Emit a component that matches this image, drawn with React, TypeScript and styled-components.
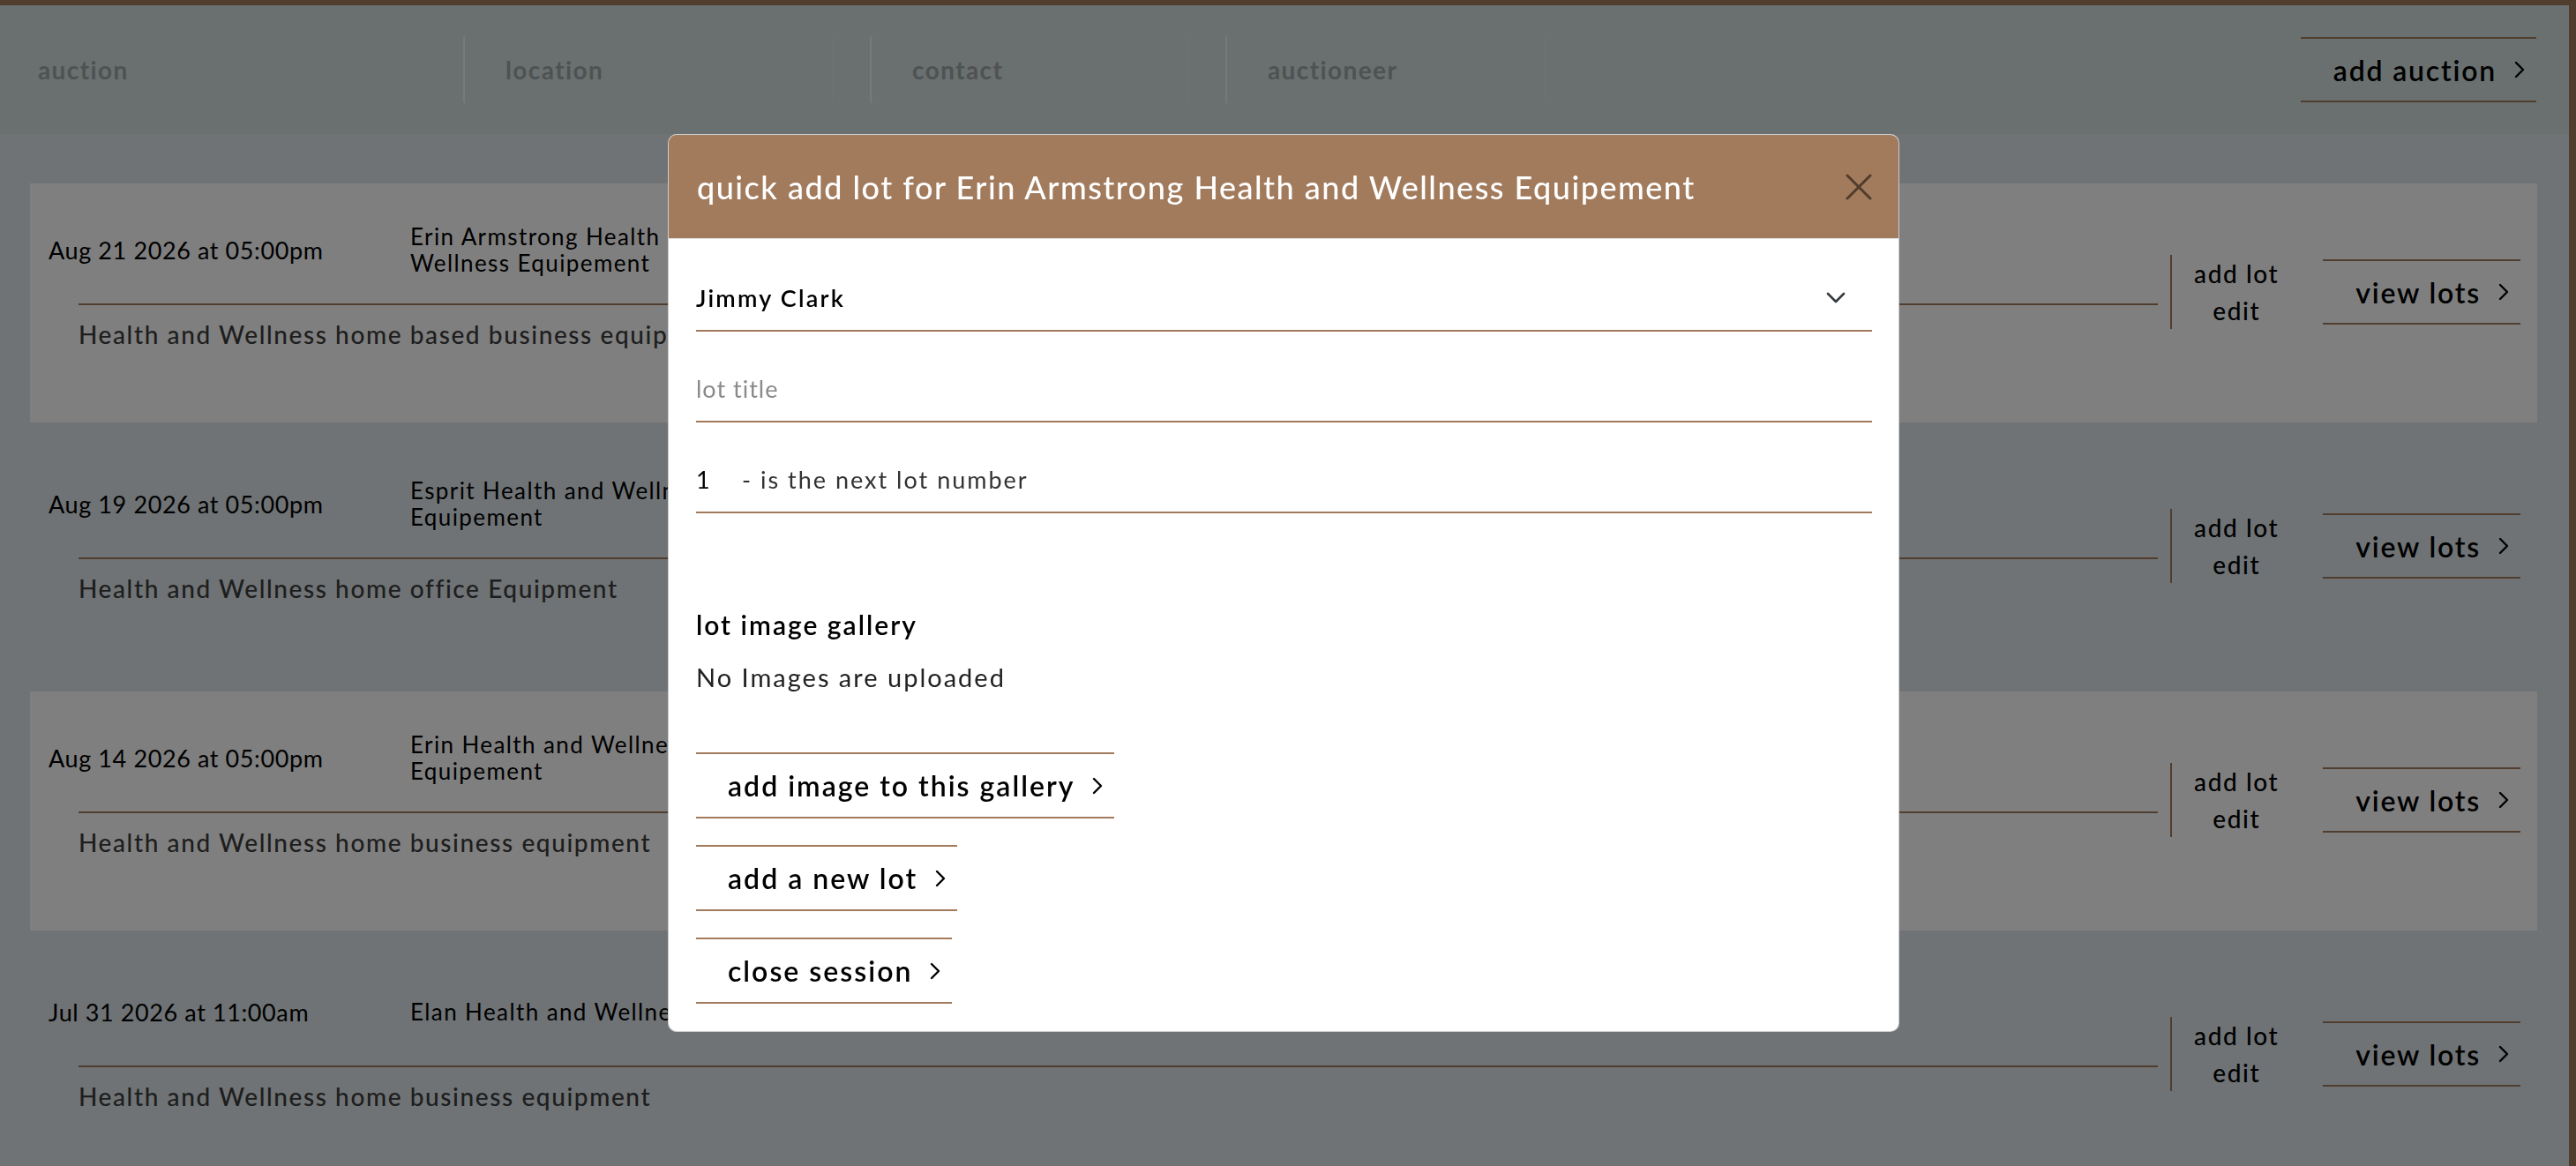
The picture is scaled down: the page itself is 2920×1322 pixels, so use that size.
import styled, { createGlobalStyle } from 'styled-components';

const brown = '#a27a5c';

const GlobalStyle = createGlobalStyle`
  * {
    box-sizing: border-box;
  }

  body {
    margin: 0;
    font-family: Lato, "Noto Sans", sans-serif;
    background: #dee6ea;
    color: #000;
  }
`;

const auctions = [
  {
    date: 'Aug 21 2026 at 05:00pm',
    name: 'Erin Armstrong Health and Wellness Equipement',
    description: 'Health and Wellness home based business equipment',
  },
  {
    date: 'Aug 19 2026 at 05:00pm',
    name: 'Esprit Health and Wellness Equipement',
    description: 'Health and Wellness home office Equipment',
  },
  {
    date: 'Aug 14 2026 at 05:00pm',
    name: 'Erin Health and Wellness Equipement',
    description: 'Health and Wellness home business equipment',
  },
  {
    date: 'Jul 31 2026 at 11:00am',
    name: 'Elan Health and Wellness',
    description: 'Health and Wellness home business equipment',
  },
];

const filters = [
  { label: 'auction', width: 483 },
  { label: 'location', width: 419 },
  { label: 'contact', width: 361 },
  { label: 'auctioneer', width: 362 },
];

const ChevronRight = () => (
  <svg width="14" height="22" viewBox="0 0 14 22" fill="none">
    <path d="M3 3 L11 11 L3 19" stroke="#000" strokeWidth="2.4" strokeLinecap="round" strokeLinejoin="round" />
  </svg>
);

const App = () => {
  return (
    <>
      <GlobalStyle />
      <Page>
        <FilterBar>
          <Filters>
            {filters.map((f, i) => (
              <FilterBox key={f.label} $w={f.width} $first={i === 0}>
                <FilterLabel>{f.label}</FilterLabel>
              </FilterBox>
            ))}
          </Filters>
          <ArrowButton>
            add auction <ChevronRight />
          </ArrowButton>
        </FilterBar>

        <AuctionList>
          {auctions.map((a, i) => (
            <AuctionCard key={a.date} $shaded={i % 2 === 0}>
              <CardMain>
                <CardTop>
                  <DateCell>{a.date}</DateCell>
                  <NameCell>{a.name}</NameCell>
                </CardTop>
                <Description>{a.description}</Description>
              </CardMain>
              <CardActions>
                <LotLinks>
                  <LotLink>add lot</LotLink>
                  <LotLink>edit</LotLink>
                </LotLinks>
                <ArrowButton>
                  view lots <ChevronRight />
                </ArrowButton>
              </CardActions>
            </AuctionCard>
          ))}
        </AuctionList>
      </Page>

      <Backdrop>
        <Modal>
          <ModalHeader>
            <ModalTitle>quick add lot for Erin Armstrong Health and Wellness Equipement</ModalTitle>
            <CloseButton aria-label="close">
              <svg width="30" height="30" viewBox="0 0 30 30">
                <path d="M2 2 L28 28 M28 2 L2 28" stroke="#000" strokeWidth="3" strokeLinecap="round" />
              </svg>
            </CloseButton>
          </ModalHeader>
          <ModalBody>
            <Field>
              <SelectValue>Jimmy Clark</SelectValue>
              <svg width="22" height="13" viewBox="0 0 22 13" fill="none">
                <path d="M2 2 L11 11 L20 2" stroke="#343a40" strokeWidth="2.6" strokeLinecap="round" strokeLinejoin="round" />
              </svg>
            </Field>
            <Field $gap>
              <Placeholder>lot title</Placeholder>
            </Field>
            <Field $gap>
              <LotNumber>1</LotNumber>
              <Suffix>- is the next lot number</Suffix>
            </Field>

            <GalleryTitle>lot image gallery</GalleryTitle>
            <GalleryNote>No Images are uploaded</GalleryNote>

            <ButtonStack>
              <ArrowButton>
                add image to this gallery <ChevronRight />
              </ArrowButton>
              <ArrowButton>
                add a new lot <ChevronRight />
              </ArrowButton>
              <ArrowButton>
                close session <ChevronRight />
              </ArrowButton>
            </ButtonStack>
          </ModalBody>
        </Modal>
      </Backdrop>
    </>
  );
};

export default App;

// page

const Page = styled.div`
  height: 100vh;
  overflow: hidden;
  border-top: 6px solid ${brown};
  border-right: 8px solid ${brown};
`;

const FilterBar = styled.header`
  height: 146px;
  display: flex;
  align-items: center;
  justify-content: space-between;
  padding-right: 37px;
  background: #d4e0de;
`;

const Filters = styled.div`
  display: flex;
  gap: 42px;
`;

const FilterBox = styled.div<{ $w: number; $first?: boolean }>`
  width: ${(p) => p.$w}px;
  height: 78px;
  display: flex;
  align-items: center;
  padding-left: ${(p) => (p.$first ? 41 : 46)}px;
  border-radius: 4px;
  border-left: 2px solid ${(p) => (p.$first ? 'transparent' : '#eef5f5')};
  border-right: 1px solid ${(p) => (p.$first ? 'transparent' : '#dce6e5')};
`;

const FilterLabel = styled.span`
  font-size: 28px;
  font-weight: 700;
  letter-spacing: 1.4px;
  color: #9ea4a4;
`;

const ArrowButton = styled.a`
  display: inline-flex;
  align-items: center;
  gap: 19px;
  align-self: center;
  height: 74px;
  padding: 0 12px 0 37px;
  border-top: 2px solid ${brown};
  border-bottom: 2px solid ${brown};
  font-size: 32px;
  font-weight: 600;
  letter-spacing: 1.8px;
  color: #000;
  white-space: nowrap;
  cursor: pointer;
`;

const AuctionList = styled.div`
  display: flex;
  flex-direction: column;
  gap: 17px;
  padding: 56px 36px 0 34px;
`;

const AuctionCard = styled.div<{ $shaded?: boolean }>`
  display: flex;
  align-items: flex-start;
  height: 271px;
  flex-shrink: 0;
  padding: 45px 19px 0 21px;
  background: ${(p) => (p.$shaded ? '#fff' : 'transparent')};
`;

const CardMain = styled.div`
  flex: 1;
  display: flex;
  flex-direction: column;
`;

const CardTop = styled.div`
  display: flex;
  align-items: center;
  min-height: 60px;
`;

const DateCell = styled.div`
  width: 410px;
  font-size: 27px;
  letter-spacing: 0.6px;
`;

const NameCell = styled.div`
  width: 360px;
  font-size: 26px;
  line-height: 30px;
  letter-spacing: 1.4px;
`;

const Description = styled.div`
  margin: 31px 0 0 34px;
  padding-top: 17px;
  border-top: 2px solid ${brown};
  font-size: 28px;
  font-weight: 500;
  line-height: 32px;
  letter-spacing: 1.6px;
  color: #3c3c3c;
`;

const CardActions = styled.div`
  display: flex;
  align-items: center;
  gap: 25px;
  margin: 36px 0 0 14px;
`;

const LotLinks = styled.div`
  width: 148px;
  height: 84px;
  display: flex;
  flex-direction: column;
  align-items: center;
  justify-content: center;
  border-left: 2px solid ${brown};
`;

const LotLink = styled.a`
  font-size: 28px;
  font-weight: 500;
  line-height: 42px;
  letter-spacing: 1.6px;
  color: #000;
  cursor: pointer;
`;

// modal

const Backdrop = styled.div`
  position: fixed;
  inset: 0;
  display: flex;
  justify-content: center;
  align-items: flex-start;
  padding: 152px 10px 0 0;
  background: rgba(0, 0, 0, 0.5);
`;

const Modal = styled.div`
  width: 1396px;
  background: #fff;
  border: 1px solid rgba(0, 0, 0, 0.2);
  border-radius: 10px;
  overflow: hidden;
`;

const ModalHeader = styled.div`
  height: 118px;
  display: flex;
  align-items: center;
  justify-content: space-between;
  padding: 0 30px 0 32px;
  background: ${brown};
  border-bottom: 1px solid #dee2e6;
`;

const ModalTitle = styled.h5`
  margin: 0;
  font-size: 36px;
  font-weight: 500;
  letter-spacing: 1.5px;
  color: #fff;
`;

const CloseButton = styled.button`
  display: flex;
  padding: 0;
  border: none;
  background: none;
  opacity: 0.5;
  cursor: pointer;
`;

const ModalBody = styled.div`
  padding: 29px 30px 31px 31px;

  ${ArrowButton} {
    align-self: flex-start;
  }
`;

const Field = styled.div<{ $gap?: boolean }>`
  height: 76px;
  display: flex;
  align-items: center;
  justify-content: space-between;
  margin-top: ${(p) => (p.$gap ? 27 : 0)}px;
  padding-right: 30px;
  border-bottom: 2px solid ${brown};
  font-size: 27px;
`;

const SelectValue = styled.span`
  font-weight: 600;
  letter-spacing: 2.2px;
`;

const Placeholder = styled.span`
  color: #8a8a8a;
  letter-spacing: 1px;
`;

const LotNumber = styled.span`
  width: 52px;
`;

const Suffix = styled.span`
  flex: 1;
  letter-spacing: 2px;
  color: #333;
`;

const GalleryTitle = styled.h6`
  margin: 109px 0 0;
  font-size: 30px;
  font-weight: 600;
  line-height: 34px;
  letter-spacing: 2px;
`;

const GalleryNote = styled.p`
  margin: 26px 0 0;
  font-size: 29px;
  line-height: 34px;
  letter-spacing: 2px;
  color: #222;
`;

const ButtonStack = styled.div`
  display: flex;
  flex-direction: column;
  align-items: flex-start;
  gap: 30px;
  margin-top: 68px;

  ${ArrowButton} {
    height: 75px;
    padding-left: 36px;
    letter-spacing: 2px;
  }
`;
